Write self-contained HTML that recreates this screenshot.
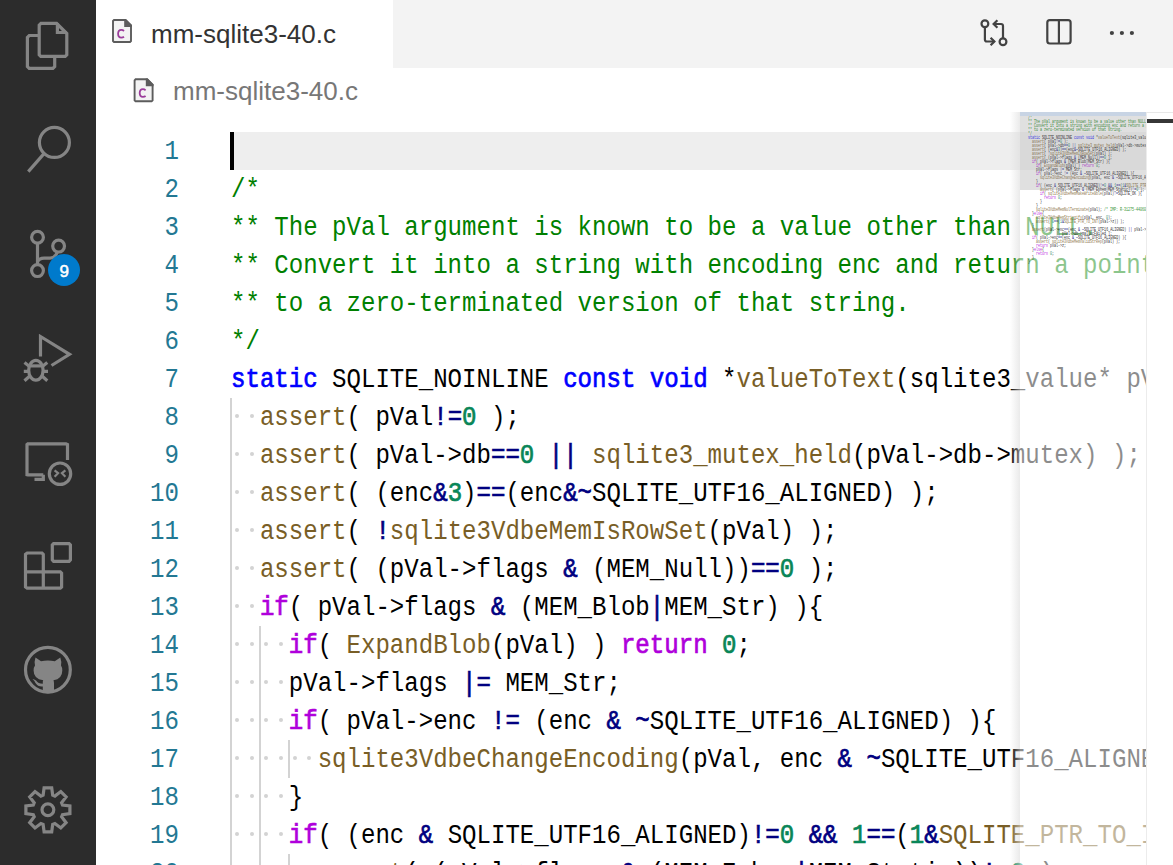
<!DOCTYPE html>
<html><head><meta charset="utf-8">
<style>
*{box-sizing:border-box}
html,body{margin:0;padding:0;width:1173px;height:865px;overflow:hidden;background:#fff;position:relative}
#act{position:absolute;left:0;top:0;width:96px;height:865px;background:#2c2c2c}
#act svg{position:absolute;left:0;top:0}
#tabs{position:absolute;left:96px;top:0;width:1077px;height:68px;background:#f3f3f3}
#tab{position:absolute;left:96px;top:0;width:297px;height:68px;background:#fff}
.ttl{position:absolute;font-family:"Liberation Sans",sans-serif;font-size:26px;line-height:30px;white-space:nowrap}
#gut{position:absolute;left:96px;top:112px;width:135px;height:753px}
.ln{position:absolute;left:0;width:179px;transform:scaleX(0.8913);transform-origin:179px 0;text-align:right;font-family:"Liberation Mono",monospace;font-size:27px;line-height:38px;height:38px;color:#237893}
#code{position:absolute;left:231px;top:133px}
.l{position:absolute;left:0;height:38px;line-height:38px;font-family:"Liberation Mono",monospace;font-size:27px;transform:scaleX(0.8913);transform-origin:0 0;white-space:pre;color:#000}
.c{color:#008000}.k{color:#0000ff;-webkit-text-stroke:0.7px #0000ff}.f{color:#795e26}.o{color:#000080;-webkit-text-stroke:0.7px #000080}.n{color:#098658;-webkit-text-stroke:0.7px #098658}.p{color:#af00db;-webkit-text-stroke:0.7px #af00db}
.g{position:absolute;width:2px;background:#d3d3d3}
.d{position:absolute;width:4px;height:4px;border-radius:50%;background:#d3d3d3}
#cur{position:absolute;left:230px;top:132px;width:4px;height:38px;background:#000}
#hl{position:absolute;left:234px;top:132px;width:939px;height:38px;background:#eeeeee}
#mm{position:absolute;left:1020px;top:112px;width:126px;height:753px;background:rgba(255,255,255,0.55)}
#mmshadow{position:absolute;left:1010px;top:112px;width:10px;height:753px;background:linear-gradient(to right,rgba(220,220,220,0),rgba(220,220,220,0.6))}
#mmhl{position:absolute;left:0;top:0;width:126px;height:4px;background:#c8d4e4}
#mmtext{position:absolute;left:8px;top:0.3px}
.ml{position:absolute;left:0;height:4px;line-height:4px;font-family:"Liberation Mono",monospace;font-size:5px;white-space:pre;color:#000;opacity:.85;transform:scaleX(0.667);transform-origin:0 0}
.ml span{-webkit-text-stroke:0}
#slider{position:absolute;left:0;top:0;width:126px;height:78px;background:rgba(100,100,100,0.2)}
#sbm{position:absolute;left:1147px;top:119px;width:26px;height:4px;background:#363636}
#sb{position:absolute;left:1146px;top:112px;width:27px;height:753px;background:#fff;border-top:1px solid #e8e8e8;border-left:1px solid #ececec}
</style></head><body>
<div id="act"></div>
<div id="tabs"></div>
<div id="tab"></div>
<svg id="icons" width="1173" height="865" style="position:absolute;left:0;top:0">
<g fill="none" stroke="#858585" stroke-width="3.2" stroke-linejoin="miter">
<!-- files -->
<path d="M41,23.3 H56.6 L66.8,33.5 V54.8 L65.2,56.4 H40.8 L39.2,54.8 V25.1 Z"/>
<path d="M57.4,23.3 V32.5 H66.8"/>
<path d="M39.2,35.5 H29.2 L27.4,37.3 V66.6 L29.2,68.4 H52.9 L54.7,66.6 V56.4"/>
<!-- search -->
<circle cx="54.4" cy="142.4" r="15"/>
<path d="M44,153.6 L28.3,171.6"/>
<!-- scm -->
<circle cx="37.5" cy="237.3" r="5.9"/>
<circle cx="58.6" cy="246.1" r="5.9"/>
<circle cx="37.5" cy="270.6" r="5.9"/>
<path d="M37.5,243.2 V264.7"/>
<path d="M37.5,262 Q39,258.1 44,258.1 H50 Q55,258.1 57.5,252"/>
<!-- debug -->
<path d="M40.5,356.5 V336.5 L69.5,354.3 L51.5,365.5"/>
<ellipse cx="35.9" cy="370.3" rx="7.2" ry="9.9"/>
<path d="M28.7,365.9 H43.1"/>
<path d="M24.5,362.5 L29.5,366.5 M47.3,362.5 L42.3,366.5 M23.8,371.4 H28.7 M48,371.4 H43.1 M24.5,380.8 L29.5,376.3 M47.3,380.8 L42.3,376.3"/>
<!-- remote -->
<path d="M67.5,460 V444.5 L66,443.9 H27.8 L27,444.5 V474.7 L27.8,474.8 H43.3"/>
<path d="M43.3,474.8 V479.4 H34.5"/>
<circle cx="60" cy="473.7" r="10.7"/>
<path d="M54.6,470.3 L58.1,473.2 L54.6,476.8 M65.4,470.3 L61.9,473.2 L65.4,476.8" stroke-width="2.2"/>
<!-- extensions -->
<path d="M27.2,553 H42 L43.3,554.3 V571.9 H60.3 L61.6,573.2 V587 L60.3,588.2 H27.2 L25.5,586.9 V554.3 Z"/>
<path d="M25.5,571.9 H43.3 M43.3,571.9 V588.2"/>
<path d="M53.6,543.7 H69.1 L70.4,545 V559.9 L69.1,561.3 H53.6 L52.3,559.9 V545 Z"/>
<!-- github -->
<circle cx="47.9" cy="669.8" r="22.4"/>
<!-- gear -->
<path d="M43.1,795.2 L44.1,787.8 L51.7,787.8 L52.7,795.2 L54.9,796.1 L60.8,791.6 L66.1,796.9 L61.6,802.8 L62.5,805.0 L69.9,806.0 L69.9,813.6 L62.5,814.6 L61.6,816.8 L66.1,822.7 L60.8,828.0 L54.9,823.5 L52.7,824.4 L51.7,831.8 L44.1,831.8 L43.1,824.4 L40.9,823.5 L35.0,828.0 L29.7,822.7 L34.2,816.8 L33.3,814.6 L25.9,813.6 L25.9,806.0 L33.3,805.0 L34.2,802.8 L29.7,796.9 L35.0,791.6 L40.9,796.1 Z"/>
<circle cx="47.9" cy="809.8" r="5.9"/>
</g>
<!-- octocat -->
<path fill="#858585" d="M35.5,657.5 L41,661.3 Q47.9,659.6 54.8,661.3 L60.3,657.5 Q61.9,662 61,665.6 Q62.3,667.5 62.3,670.5 Q62.3,679 53.5,680.2 Q54,681.4 54,683.5 V692.5 Q47.9,693.8 42.8,692.5 V686.5 Q38,687 35.5,683 Q34.5,680.5 32.5,679.3 Q34.5,678.8 36.3,680.8 Q38,683.6 42.8,683.7 Q42.6,681.1 43.2,680.2 Q33.6,679 33.6,670.5 Q33.6,667.5 35,665.6 Q34,662 35.5,657.5 Z"/>
<!-- badge -->
<circle cx="64" cy="270" r="16" fill="#007acc"/>
<text x="64.2" y="276.8" fill="#fff" font-family="Liberation Sans" font-size="17" text-anchor="middle" stroke="#fff" stroke-width="0.5">9</text>
<!-- file icons -->
<g id="fic">
<path d="M114,20 H125.6 L131,25.4 V41 L130,42 H114 L113,41 V21 Z" fill="#f3f3f3" stroke="#5c5c5c" stroke-width="1.9"/>
<path d="M124.2,19.2 H126 L131.9,25.1 V27 H124.2 Z" fill="#5c5c5c"/>
<path d="M124,31 C123.3,30.3 122.3,29.9 121.3,29.9 C119.2,29.9 118.1,31.7 118.1,33.8 C118.1,35.9 119.2,37.6 121.3,37.6 C122.3,37.6 123.3,37.3 124,36.7" fill="none" stroke="#9b3d9b" stroke-width="1.8"/>
</g>
<g transform="translate(21.6,59.3)">
<path d="M114,20 H125.6 L131,25.4 V41 L130,42 H114 L113,41 V21 Z" fill="#f3f3f3" stroke="#5c5c5c" stroke-width="1.9"/>
<path d="M124.2,19.2 H126 L131.9,25.1 V27 H124.2 Z" fill="#5c5c5c"/>
<path d="M124,31 C123.3,30.3 122.3,29.9 121.3,29.9 C119.2,29.9 118.1,31.7 118.1,33.8 C118.1,35.9 119.2,37.6 121.3,37.6 C122.3,37.6 123.3,37.3 124,36.7" fill="none" stroke="#9b3d9b" stroke-width="1.8"/>
</g>
<!-- toolbar -->
<g fill="none" stroke="#424242" stroke-width="2.2">
<circle cx="984.9" cy="23.8" r="3.4"/>
<circle cx="1003" cy="41.8" r="3.4"/>
<path d="M984.9,27.2 V39.5 Q984.9,41.5 986.9,41.5 H994.2"/>
<path d="M990.6,37.7 L994.4,41.5 L990.6,45.3"/>
<path d="M1003,38.4 V26 Q1003,24 1001,24 H993.6"/>
<path d="M997.4,20.2 L993.6,24 L997.4,27.8"/>
<rect x="1047.3" y="20.2" width="23.3" height="23.3" rx="2.5"/>
<path d="M1058.9,20.2 V43.5"/>
</g>
<g fill="#424242"><circle cx="1111.9" cy="33" r="2.1"/><circle cx="1121.9" cy="33" r="2.1"/><circle cx="1131.9" cy="33" r="2.1"/></g>
</svg>
<div class="ttl" style="left:151px;top:19px;color:#333">mm-sqlite3-40.c</div>
<div class="ttl" style="left:173px;top:76px;color:#777">mm-sqlite3-40.c</div>
<div id="hl"></div>
<div class="ln" style="top:133px">1</div><div class="ln" style="top:171px">2</div><div class="ln" style="top:209px">3</div><div class="ln" style="top:247px">4</div><div class="ln" style="top:285px">5</div><div class="ln" style="top:323px">6</div><div class="ln" style="top:361px">7</div><div class="ln" style="top:399px">8</div><div class="ln" style="top:437px">9</div><div class="ln" style="top:475px">10</div><div class="ln" style="top:513px">11</div><div class="ln" style="top:551px">12</div><div class="ln" style="top:589px">13</div><div class="ln" style="top:627px">14</div><div class="ln" style="top:665px">15</div><div class="ln" style="top:703px">16</div><div class="ln" style="top:741px">17</div><div class="ln" style="top:779px">18</div><div class="ln" style="top:817px">19</div><div class="ln" style="top:855px">20</div>
<div id="code"><div class="l" style="top:0px"></div><div class="l" style="top:38px"><span class="c">/*</span></div><div class="l" style="top:76px"><span class="c">** The pVal argument is known to be a value other than NULL.</span></div><div class="l" style="top:114px"><span class="c">** Convert it into a string with encoding enc and return a pointer</span></div><div class="l" style="top:152px"><span class="c">** to a zero-terminated version of that string.</span></div><div class="l" style="top:190px"><span class="c">*/</span></div><div class="l" style="top:228px"><span class="k">static</span> SQLITE_NOINLINE <span class="k">const</span> <span class="k">void</span> *<span class="f">valueToText</span>(sqlite3_value* pVal, u8 enc){</div><div class="l" style="top:266px">  <span class="f">assert</span>( pVal<span class="o">!=</span><span class="n">0</span> );</div><div class="l" style="top:304px">  <span class="f">assert</span>( pVal-&gt;db<span class="o">==</span><span class="n">0</span> <span class="o">||</span> <span class="f">sqlite3_mutex_held</span>(pVal-&gt;db-&gt;mutex) );</div><div class="l" style="top:342px">  <span class="f">assert</span>( (enc<span class="o">&amp;</span><span class="n">3</span>)<span class="o">==</span>(enc<span class="o">&amp;~</span>SQLITE_UTF16_ALIGNED) );</div><div class="l" style="top:380px">  <span class="f">assert</span>( <span class="o">!</span><span class="f">sqlite3VdbeMemIsRowSet</span>(pVal) );</div><div class="l" style="top:418px">  <span class="f">assert</span>( (pVal-&gt;flags <span class="o">&amp;</span> (MEM_Null))<span class="o">==</span><span class="n">0</span> );</div><div class="l" style="top:456px">  <span class="p">if</span>( pVal-&gt;flags <span class="o">&amp;</span> (MEM_Blob<span class="o">|</span>MEM_Str) ){</div><div class="l" style="top:494px">    <span class="p">if</span>( <span class="f">ExpandBlob</span>(pVal) ) <span class="p">return</span> <span class="n">0</span>;</div><div class="l" style="top:532px">    pVal-&gt;flags <span class="o">|=</span> MEM_Str;</div><div class="l" style="top:570px">    <span class="p">if</span>( pVal-&gt;enc <span class="o">!=</span> (enc <span class="o">&amp;</span> <span class="o">~</span>SQLITE_UTF16_ALIGNED) ){</div><div class="l" style="top:608px">      <span class="f">sqlite3VdbeChangeEncoding</span>(pVal, enc <span class="o">&amp;</span> <span class="o">~</span>SQLITE_UTF16_ALIGNED);</div><div class="l" style="top:646px">    }</div><div class="l" style="top:684px">    <span class="p">if</span>( (enc <span class="o">&amp;</span> SQLITE_UTF16_ALIGNED)<span class="o">!=</span><span class="n">0</span> <span class="o">&amp;&amp;</span> <span class="n">1</span><span class="o">==</span>(<span class="n">1</span><span class="o">&amp;</span><span class="f">SQLITE_PTR_TO_INT</span>(pVal-&gt;z)) ){</div><div class="l" style="top:722px">      <span class="f">assert</span>( (pVal-&gt;flags <span class="o">&amp;</span> (MEM_Ephem<span class="o">|</span>MEM_Static))<span class="o">!=</span><span class="n">0</span> );</div></div><div class="d" style="left:235.2px;top:414px"></div><div class="d" style="left:249.6px;top:414px"></div><div class="d" style="left:235.2px;top:452px"></div><div class="d" style="left:249.6px;top:452px"></div><div class="d" style="left:235.2px;top:490px"></div><div class="d" style="left:249.6px;top:490px"></div><div class="d" style="left:235.2px;top:528px"></div><div class="d" style="left:249.6px;top:528px"></div><div class="d" style="left:235.2px;top:566px"></div><div class="d" style="left:249.6px;top:566px"></div><div class="d" style="left:235.2px;top:604px"></div><div class="d" style="left:249.6px;top:604px"></div><div class="d" style="left:235.2px;top:642px"></div><div class="d" style="left:249.6px;top:642px"></div><div class="d" style="left:264.1px;top:642px"></div><div class="d" style="left:278.5px;top:642px"></div><div class="d" style="left:235.2px;top:680px"></div><div class="d" style="left:249.6px;top:680px"></div><div class="d" style="left:264.1px;top:680px"></div><div class="d" style="left:278.5px;top:680px"></div><div class="d" style="left:235.2px;top:718px"></div><div class="d" style="left:249.6px;top:718px"></div><div class="d" style="left:264.1px;top:718px"></div><div class="d" style="left:278.5px;top:718px"></div><div class="d" style="left:235.2px;top:756px"></div><div class="d" style="left:249.6px;top:756px"></div><div class="d" style="left:264.1px;top:756px"></div><div class="d" style="left:278.5px;top:756px"></div><div class="d" style="left:293.0px;top:756px"></div><div class="d" style="left:307.4px;top:756px"></div><div class="d" style="left:235.2px;top:794px"></div><div class="d" style="left:249.6px;top:794px"></div><div class="d" style="left:264.1px;top:794px"></div><div class="d" style="left:278.5px;top:794px"></div><div class="d" style="left:235.2px;top:832px"></div><div class="d" style="left:249.6px;top:832px"></div><div class="d" style="left:264.1px;top:832px"></div><div class="d" style="left:278.5px;top:832px"></div><div class="d" style="left:235.2px;top:870px"></div><div class="d" style="left:249.6px;top:870px"></div><div class="d" style="left:264.1px;top:870px"></div><div class="d" style="left:278.5px;top:870px"></div><div class="d" style="left:293.0px;top:870px"></div><div class="d" style="left:307.4px;top:870px"></div><div class="g" style="left:230px;top:398px;height:532px"></div><div class="g" style="left:259px;top:626px;height:304px"></div><div class="g" style="left:288px;top:740px;height:38px"></div><div class="g" style="left:288px;top:854px;height:76px"></div>
<div id="cur"></div>
<div id="mmshadow"></div>
<div id="mm"><div id="mmtext"><div class="ml" style="top:0px"></div><div class="ml" style="top:4px"><span class="c">/*</span></div><div class="ml" style="top:8px"><span class="c">** The pVal argument is known to be a value other than NULL.</span></div><div class="ml" style="top:12px"><span class="c">** Convert it into a string with encoding enc and return a pointer</span></div><div class="ml" style="top:16px"><span class="c">** to a zero-terminated version of that string.</span></div><div class="ml" style="top:20px"><span class="c">*/</span></div><div class="ml" style="top:24px"><span class="k">static</span> SQLITE_NOINLINE <span class="k">const</span> <span class="k">void</span> *<span class="f">valueToText</span>(sqlite3_value* pVal, u8 enc){</div><div class="ml" style="top:28px">  <span class="f">assert</span>( pVal<span class="o">!=</span><span class="n">0</span> );</div><div class="ml" style="top:32px">  <span class="f">assert</span>( pVal-&gt;db<span class="o">==</span><span class="n">0</span> <span class="o">||</span> <span class="f">sqlite3_mutex_held</span>(pVal-&gt;db-&gt;mutex) );</div><div class="ml" style="top:36px">  <span class="f">assert</span>( (enc<span class="o">&amp;</span><span class="n">3</span>)<span class="o">==</span>(enc<span class="o">&amp;~</span>SQLITE_UTF16_ALIGNED) );</div><div class="ml" style="top:40px">  <span class="f">assert</span>( <span class="o">!</span><span class="f">sqlite3VdbeMemIsRowSet</span>(pVal) );</div><div class="ml" style="top:44px">  <span class="f">assert</span>( (pVal-&gt;flags <span class="o">&amp;</span> (MEM_Null))<span class="o">==</span><span class="n">0</span> );</div><div class="ml" style="top:48px">  <span class="p">if</span>( pVal-&gt;flags <span class="o">&amp;</span> (MEM_Blob<span class="o">|</span>MEM_Str) ){</div><div class="ml" style="top:52px">    <span class="p">if</span>( <span class="f">ExpandBlob</span>(pVal) ) <span class="p">return</span> <span class="n">0</span>;</div><div class="ml" style="top:56px">    pVal-&gt;flags <span class="o">|=</span> MEM_Str;</div><div class="ml" style="top:60px">    <span class="p">if</span>( pVal-&gt;enc <span class="o">!=</span> (enc <span class="o">&amp;</span> <span class="o">~</span>SQLITE_UTF16_ALIGNED) ){</div><div class="ml" style="top:64px">      <span class="f">sqlite3VdbeChangeEncoding</span>(pVal, enc <span class="o">&amp;</span> <span class="o">~</span>SQLITE_UTF16_ALIGNED);</div><div class="ml" style="top:68px">    }</div><div class="ml" style="top:72px">    <span class="p">if</span>( (enc <span class="o">&amp;</span> SQLITE_UTF16_ALIGNED)<span class="o">!=</span><span class="n">0</span> <span class="o">&amp;&amp;</span> <span class="n">1</span><span class="o">==</span>(<span class="n">1</span><span class="o">&amp;</span><span class="f">SQLITE_PTR_TO_INT</span>(pVal-&gt;z)) ){</div><div class="ml" style="top:76px">      <span class="f">assert</span>( (pVal-&gt;flags <span class="o">&amp;</span> (MEM_Ephem<span class="o">|</span>MEM_Static))<span class="o">!=</span><span class="n">0</span> );</div><div class="ml" style="top:80px">      <span class="p">if</span>( <span class="f">sqlite3VdbeMemMakeWriteable</span>(pVal)<span class="o">!=</span>SQLITE_OK ){</div><div class="ml" style="top:84px">        <span class="p">return</span> <span class="n">0</span>;</div><div class="ml" style="top:88px">      }</div><div class="ml" style="top:92px">    }</div><div class="ml" style="top:96px">    <span class="f">sqlite3VdbeMemNulTerminate</span>(pVal); <span class="c">/* IMP: R-31275-44060 */</span></div><div class="ml" style="top:100px">  }<span class="p">else</span>{</div><div class="ml" style="top:104px">    <span class="f">sqlite3VdbeMemStringify</span>(pVal, enc, <span class="n">0</span>);</div><div class="ml" style="top:108px">    <span class="f">assert</span>( <span class="n">0</span><span class="o">==</span>(<span class="n">1</span><span class="o">&amp;</span><span class="f">SQLITE_PTR_TO_INT</span>(pVal-&gt;z)) );</div><div class="ml" style="top:112px">  }</div><div class="ml" style="top:116px">  <span class="f">assert</span>(pVal-&gt;enc<span class="o">==</span>(enc <span class="o">&amp;</span> <span class="o">~</span>SQLITE_UTF16_ALIGNED) <span class="o">||</span> pVal-&gt;db<span class="o">==</span><span class="n">0</span></div><div class="ml" style="top:120px">              <span class="o">||</span> pVal-&gt;db-&gt;mallocFailed );</div><div class="ml" style="top:124px">  <span class="p">if</span>( pVal-&gt;enc<span class="o">==</span>(enc <span class="o">&amp;</span> <span class="o">~</span>SQLITE_UTF16_ALIGNED) ){</div><div class="ml" style="top:128px">    <span class="f">assert</span>( <span class="f">sqlite3VdbeMemValidStrRep</span>(pVal) );</div><div class="ml" style="top:132px">    <span class="p">return</span> pVal-&gt;z;</div><div class="ml" style="top:136px">  }<span class="p">else</span>{</div><div class="ml" style="top:140px">    <span class="p">return</span> <span class="n">0</span>;</div><div class="ml" style="top:144px">  }</div><div class="ml" style="top:148px">}</div></div><div id="slider"></div><div id="mmhl"></div></div>
<div id="sb"></div><div id="sbm"></div>
</body></html>
